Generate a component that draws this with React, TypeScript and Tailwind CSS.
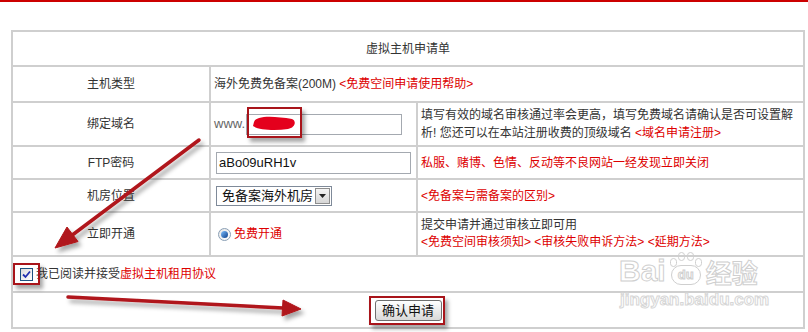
import React from 'react';

const red = 'text-[#dd0000]';

function Label({ children }: { children: React.ReactNode }) {
  return <div className="bg-white flex items-center justify-center">{children}</div>;
}

function Checkbox() {
  return (
    <span className="inline-flex w-[13px] h-[13px] border border-[#1c5180] bg-gradient-to-br from-[#dcdcdc] to-white items-center justify-center">
      <svg width="9" height="9" viewBox="0 0 9 9">
        <path d="M1 4.5 L3.5 7 L8 1.5" fill="none" stroke="#2130b0" strokeWidth="1.8" />
      </svg>
    </span>
  );
}

function Radio() {
  return (
    <span className="inline-flex w-[13px] h-[13px] rounded-full border border-[#8a9fb5] bg-gradient-to-br from-[#e6e6e6] to-white items-center justify-center">
      <span className="w-[7px] h-[7px] rounded-full bg-gradient-to-br from-[#7fc0ff] to-[#0a3f8a]" />
    </span>
  );
}

export default function App() {
  return (
    <div className="relative w-[808px] h-[332px] overflow-hidden bg-white text-[12px] text-[#333] font-['Liberation_Sans','Noto_Sans_CJK_SC',sans-serif]">
      <div className="h-[2px] bg-[#cc0000]" />

      <div className="w-[794px] ml-[11px] mt-[28px] border-2 border-[#cfcfcf] bg-[#cfcfcf] flex flex-col gap-[2px]">
        <div className="h-[33px] bg-white flex items-center justify-center">虚拟主机申请单</div>

        <div className="h-[34px] grid grid-cols-[196px_1fr] gap-[2px]">
          <Label>主机类型</Label>
          <div className="bg-white flex items-center pl-[3px]">
            海外免费免备案(200M)&nbsp;<span className={red}>&lt;免费空间申请使用帮助&gt;</span>
          </div>
        </div>

        <div className="h-[42px] grid grid-cols-[196px_205px_1fr] gap-[2px]">
          <Label>绑定域名</Label>
          <div className="bg-white flex items-center pl-[3px]">
            <span className="text-[13px] text-[#666]">www.</span>
            <span className="ml-px mt-[1px] w-[156px] h-[21px] border border-[#a4a9b0] bg-white" />
          </div>
          <div className="bg-white flex flex-col justify-center pl-[3px] pr-[4px] leading-[18px]">
            <span>填写有效的域名审核通过率会更高，填写免费域名请确认是否可设置解</span>
            <span>
              析! 您还可以在本站注册收费的顶级域名 <span className={red}>&lt;域名申请注册&gt;</span>
            </span>
          </div>
        </div>

        <div className="h-[31px] grid grid-cols-[196px_205px_1fr] gap-[2px]">
          <Label>FTP密码</Label>
          <div className="bg-white flex items-center pl-[5px]">
            <span className="w-[195px] h-[22px] border border-[#a4a9b0] flex items-center pl-[2px] text-[13px] text-[#111] font-['Liberation_Sans',sans-serif]">
              aBo09uRH1v
            </span>
          </div>
          <div className={`bg-white flex items-center pl-[3px] ${red}`}>
            私服、赌博、色情、反动等不良网站一经发现立即关闭
          </div>
        </div>

        <div className="h-[31px] grid grid-cols-[196px_205px_1fr] gap-[2px]">
          <Label>机房位置</Label>
          <div className="bg-white flex items-center pl-[5px]">
            <span className="w-[116px] h-[20px] border border-[#7f8a99] flex items-center justify-between pl-[5px] pr-px text-[13px] text-[#111]">
              免备案海外机房
              <span className="w-[15px] h-[16px] border border-[#8d8d8d] bg-gradient-to-b from-[#f4f4f4] to-[#d6d6d6] flex items-center justify-center">
                <svg width="7" height="4" viewBox="0 0 7 4">
                  <path d="M0 0 H7 L3.5 4 Z" fill="#222" />
                </svg>
              </span>
            </span>
          </div>
          <div className={`bg-white flex items-center pl-[3px] ${red}`}>&lt;免备案与需备案的区别&gt;</div>
        </div>

        <div className="h-[42px] grid grid-cols-[196px_205px_1fr] gap-[2px]">
          <Label>立即开通</Label>
          <div className="bg-white flex items-center pl-[7px] gap-[3px]">
            <Radio />
            <span className={red}>免费开通</span>
          </div>
          <div className="bg-white flex flex-col justify-center pl-[3px] leading-[17px]">
            <span>提交申请并通过审核立即可用</span>
            <span className={red}>&lt;免费空间审核须知&gt; &lt;审核失败申诉方法&gt; &lt;延期方法&gt;</span>
          </div>
        </div>

        <div className="h-[34px] bg-white flex items-center pl-[7px] gap-[3px]">
          <Checkbox />
          <span>
            我已阅读并接受<span className={red}>虚拟主机租用协议</span>
          </span>
        </div>

        <div className="h-[34px] bg-white flex items-center justify-center">
          <button className="w-[67px] h-[21px] border border-[#6f6f6f] rounded-[3px] bg-gradient-to-b from-white to-[#d9d9d9] text-[13px] text-[#111] leading-none">
            确认申请
          </button>
        </div>
      </div>

      {/* red annotation boxes */}
      <div className="absolute left-[247px] top-[107px] w-[55px] h-[31px] border-2 border-[#a8141a] shadow-[3px_4px_4px_rgba(0,0,0,0.35)]" />
      <div className="absolute left-[13px] top-[263px] w-[27px] h-[22px] border-2 border-[#a8141a] shadow-[3px_4px_4px_rgba(0,0,0,0.35)]" />
      <div className="absolute left-[369px] top-[296px] w-[76px] h-[29px] border-2 border-[#a8141a] shadow-[3px_4px_4px_rgba(0,0,0,0.35)]" />

      {/* arrows and scribble */}
      <svg className="absolute inset-0 pointer-events-none" width="808" height="332">
        <defs>
          <filter id="sh" x="-20%" y="-20%" width="140%" height="160%">
            <feDropShadow dx="3" dy="4" stdDeviation="2" floodColor="#000" floodOpacity="0.35" />
          </filter>
        </defs>
        <path d="M254 122 C256 115, 275 116, 292 119 C297 121, 295 128, 288 129 C275 131, 258 130, 253 126 Z" fill="#e4001c" />
        <g filter="url(#sh)" fill="#b0141a" stroke="#b0141a">
          <line x1="199" y1="140" x2="71" y2="236" strokeWidth="3.5" strokeLinecap="round" />
          <polygon points="55,248 78,241.5 67,227" strokeWidth="1" />
          <line x1="68" y1="297" x2="283" y2="308" strokeWidth="3.5" strokeLinecap="round" />
          <polygon points="301,309 283,300 282,316" strokeWidth="1" />
        </g>
      </svg>

      {/* baidu watermark */}
      <div className="absolute left-[619px] top-[252px] flex items-end pointer-events-none select-none">
        <span className="text-[30px] leading-[30px] font-bold text-white [-webkit-text-stroke:1px_#cfcfcf] font-['Liberation_Sans',sans-serif]">Bai</span>
        <span className="relative w-[36px] h-[34px] mx-[2px]">
          <span className="absolute left-[2px] top-[6px] w-[7px] h-[9px] rounded-full border border-[#cfcfcf]" />
          <span className="absolute left-[10px] top-0 w-[7px] h-[9px] rounded-full border border-[#cfcfcf]" />
          <span className="absolute left-[19px] top-0 w-[7px] h-[9px] rounded-full border border-[#cfcfcf]" />
          <span className="absolute left-[27px] top-[6px] w-[7px] h-[9px] rounded-full border border-[#cfcfcf]" />
          <span className="absolute left-[3px] top-[13px] w-[30px] h-[20px] rounded-full border border-[#cfcfcf] flex items-center justify-center text-[13px] font-bold text-white [-webkit-text-stroke:1px_#cfcfcf]">du</span>
        </span>
        <span className="text-[26px] leading-[28px] font-bold text-white [-webkit-text-stroke:1px_#cfcfcf] font-['Noto_Sans_CJK_SC',sans-serif]">经验</span>
      </div>
      <div className="absolute left-[620px] top-[291px] text-[17px] leading-[18px] font-bold text-white [-webkit-text-stroke:1px_#d6d6d6] font-['Liberation_Sans',sans-serif] pointer-events-none select-none">
        jingyan.baidu.com
      </div>
    </div>
  );
}
